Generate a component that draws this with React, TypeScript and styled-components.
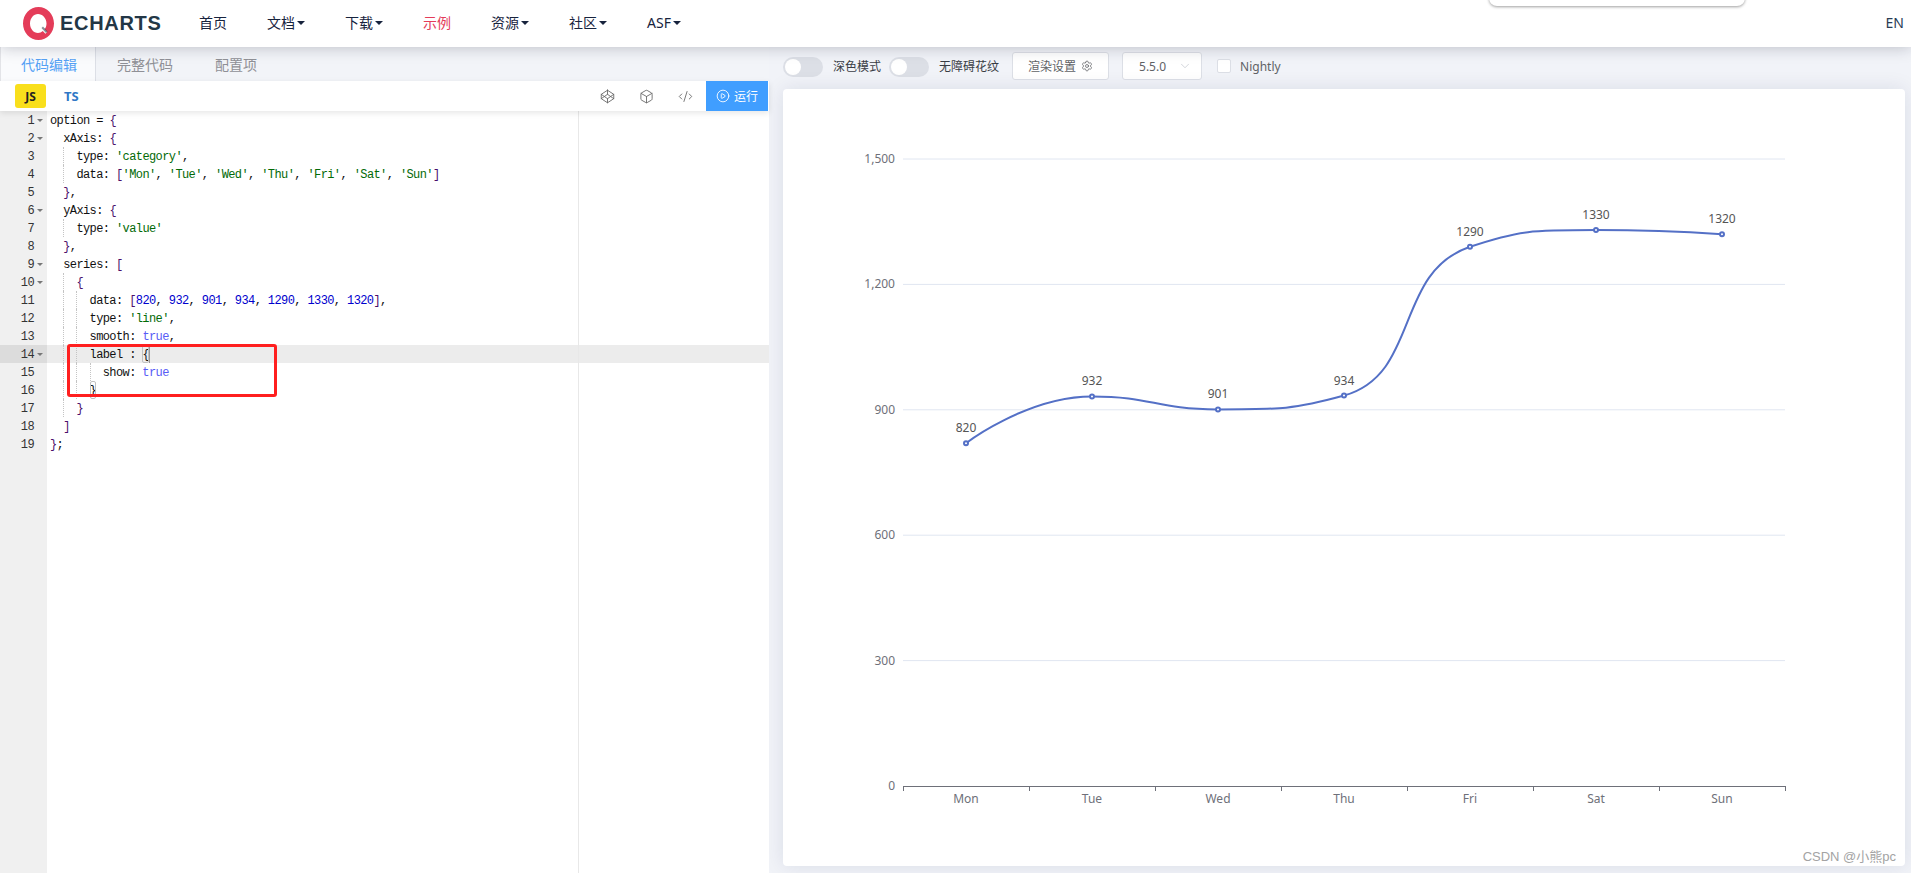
import React, { useMemo } from "react";
import styled, { createGlobalStyle } from "styled-components";
import { Box, ChevronDown, CirclePlay, CodeXml, Codepen, Settings } from "lucide-react";

const Global = createGlobalStyle`
  html, body { margin: 0; padding: 0; height: 100%; background: #fff; overflow: hidden; }
  body { font-family: "Noto Sans", "Noto Sans CJK SC", sans-serif; }
  * { box-sizing: border-box; }
`;

const Page = styled.div`
  width: 1911px;
  height: 873px;
  display: flex;
  flex-direction: column;
  overflow: hidden;
  position: relative;
`;

/* ---------- header ---------- */
const Header = styled.header`
  height: 47px;
  flex: none;
  display: flex;
  align-items: center;
  background: #fff;
  position: relative;
  z-index: 5;
  box-shadow: 0 0 16px rgba(20, 25, 45, 0.26);
`;
const Logo = styled.div`
  width: 199px;
  padding-left: 23px;
  display: flex;
  align-items: center;
  gap: 6px;
  flex: none;
  margin-top: -1px;
`;
const LogoWord = styled.span`
  font-family: "Liberation Sans", sans-serif;
  font-weight: 700;
  font-size: 20px;
  letter-spacing: 0.7px;
  color: #233746;
  line-height: 1;
`;
const Nav = styled.nav`
  display: flex;
  align-items: center;
  gap: 40px;
  flex: 1;
  margin-top: -1px;
`;
const NavItem = styled.a<{ $active?: boolean }>`
  display: flex;
  align-items: center;
  font-size: 14px;
  line-height: 20px;
  color: ${(p) => (p.$active ? "#e43c59" : "#17233d")};
`;
const Caret = styled.i`
  width: 0;
  height: 0;
  margin-left: 2px;
  border-left: 4px solid transparent;
  border-right: 4px solid transparent;
  border-top: 4px solid #17233d;
`;
const Lang = styled.span`
  font-size: 14px;
  color: #293c55;
  padding-right: 7px;
  margin-top: -3px;
`;
const SearchPop = styled.div`
  position: absolute;
  left: 1489px;
  top: -20px;
  width: 256px;
  height: 26px;
  background: #fff;
  border-radius: 8px;
  box-shadow: 0 1px 3px rgba(0, 0, 0, 0.38);
`;

/* ---------- layout ---------- */
const Main = styled.main`
  flex: 1;
  min-height: 0;
  display: flex;
`;
const Left = styled.section`
  width: 769px;
  flex: none;
  display: flex;
  flex-direction: column;
  background: #fff;
  position: relative;
  z-index: 2;
`;
const Right = styled.section`
  flex: 1;
  min-width: 0;
  display: flex;
  flex-direction: column;
  background: #f1f3f8;
  padding: 0 6px 7px 14px;
`;

/* ---------- tabs ---------- */
const Tabs = styled.div`
  height: 34px;
  flex: none;
  display: flex;
  background: #f2f4f8;
`;
const Tab = styled.div<{ $active?: boolean }>`
  font-size: 14px;
  line-height: 36px;
  padding: 0 21px;
  color: ${(p) => (p.$active ? "#55a1f5" : "#8f9096")};
  ${(p) =>
    p.$active
      ? `background: #fafbfd; border-left: 1px solid #e3e4e8; border-right: 1px solid #dcdfe6; padding-left: 20px; padding-right: 18px;`
      : ""}
`;

/* ---------- toolbar ---------- */
const Toolbar = styled.div`
  height: 30px;
  flex: none;
  display: flex;
  align-items: center;
  background: #fff;
  padding-left: 15px;
  position: relative;
  z-index: 2;
  box-shadow: 0 2px 6px rgba(0, 0, 0, 0.1);
`;
const JsBadge = styled.span`
  width: 31px;
  height: 24px;
  border-radius: 3px;
  background: #f9df1c;
  color: #222;
  font-size: 12px;
  font-weight: 700;
  display: flex;
  align-items: center;
  justify-content: center;
`;
const TsBadge = styled.span`
  margin-left: 18px;
  color: #3178c6;
  font-size: 13px;
  font-weight: 700;
`;
const ToolIcons = styled.div`
  margin-left: auto;
  display: flex;
  align-items: center;
  gap: 24px;
  color: #666;
  margin-right: 13px;
`;
const RunButton = styled.button`
  width: 62px;
  height: 30px;
  margin-right: 1px;
  background: #409eff;
  border: 0;
  padding: 0;
  color: #fff;
  font: inherit;
  font-size: 12px;
  display: flex;
  align-items: center;
  justify-content: center;
  gap: 4px;
`;

/* ---------- editor ---------- */
const Editor = styled.div`
  flex: 1;
  min-height: 0;
  display: flex;
  position: relative;
  font-family: "Liberation Mono", monospace;
  font-size: 12px;
  letter-spacing: -0.6px;
  line-height: 20px;
  &::after {
    content: "";
    position: absolute;
    left: 578px;
    top: 0;
    bottom: 0;
    width: 1px;
    background: #e8e8e8;
  }
`;
const Gutter = styled.div`
  width: 47px;
  flex: none;
  background: #f0f0f0;
`;
const GutterCell = styled.div<{ $active?: boolean }>`
  height: 18px;
  padding-right: 13px;
  text-align: right;
  color: #333;
  position: relative;
  background: ${(p) => (p.$active ? "#dcdcdc" : "transparent")};
`;
const Fold = styled.i`
  position: absolute;
  left: 37px;
  top: 8px;
  width: 0;
  height: 0;
  border-left: 3px solid transparent;
  border-right: 3px solid transparent;
  border-top: 3px solid #777;
`;
const Code = styled.div`
  flex: 1;
  min-width: 0;
`;
const Line = styled.div<{ $active?: boolean }>`
  height: 18px;
  padding-left: 3px;
  white-space: pre;
  color: #111;
  display: flex;
  background: ${(p) => (p.$active ? "#ececec" : "transparent")};
`;
const Indent = styled.span<{ $guide?: boolean }>`
  flex: none;
  display: block;
  width: 13.2px;
  height: 18px;
  ${(p) => (p.$guide ? "border-left: 1px dotted #c4c4c4;" : "")}
`;
const tokenColors: Record<string, string> = {
  s: "#036a07",
  n: "#0000cd",
  k: "#585cf6",
  p: "#4b0f6b",
  t: "#111",
};
const Token = styled.span<{ $k: string }>`
  color: ${(p) => tokenColors[p.$k]};
`;
const Matched = styled.span`
  display: inline-block;
  height: 18px;
  outline: 1px solid #c0c0c0;
  outline-offset: -1px;
  border-radius: 2px;
  color: #111;
`;
const Cursor = styled.span`
  display: inline-block;
  width: 1px;
  height: 18px;
  background: #999;
`;
const RedBox = styled.div`
  position: absolute;
  left: 67px;
  top: 233px;
  width: 210px;
  height: 53px;
  border: 3px solid #ff1f1f;
  border-radius: 3px;
  z-index: 3;
`;

/* ---------- right panel ---------- */
const Controls = styled.div`
  height: 38px;
  margin-bottom: 4px;
  flex: none;
  display: flex;
  align-items: center;
  font-size: 12px;
  color: #3a3d45;
`;
const Switch = styled.span`
  width: 40px;
  height: 20px;
  margin-top: 2px;
  border-radius: 10px;
  background: #dcdfe6;
  padding: 2px;
  flex: none;
  &::before {
    content: "";
    display: block;
    width: 16px;
    height: 16px;
    border-radius: 50%;
    background: #fff;
  }
`;
const SwitchLabel = styled.span`
  margin-left: 10px;
  margin-right: 8px;
  white-space: nowrap;
`;
const OutlineBox = styled.div`
  height: 28px;
  display: flex;
  align-items: center;
  background: #fff;
  border: 1px solid #dcdfe6;
  border-radius: 3px;
  color: #606266;
`;
const RenderButton = styled(OutlineBox)`
  width: 97px;
  margin-left: 5px;
  justify-content: center;
  gap: 5px;
`;
const VersionSelect = styled(OutlineBox)`
  width: 80px;
  margin-left: 13px;
  padding: 0 9px 0 16px;
  justify-content: space-between;
  color: #606266;
  svg {
    color: #c0c4cc;
  }
`;
const Check = styled.span`
  width: 14px;
  height: 14px;
  margin-left: 15px;
  background: #fff;
  border: 1px solid #dcdfe6;
  border-radius: 2px;
`;
const CheckLabel = styled.span`
  margin-left: 9px;
  color: #606266;
`;
const Card = styled.div`
  flex: 1;
  min-height: 0;
  background: #fff;
  border-radius: 4px;
  box-shadow: 0 0 20px rgba(20, 30, 80, 0.1);
  position: relative;
`;
const ChartSvg = styled.svg`
  display: block;
  width: 100%;
  height: 100%;
  font-family: "Noto Sans", "Noto Sans CJK SC", sans-serif;
  font-size: 12px;
`;
const Watermark = styled.div`
  position: absolute;
  right: 9px;
  bottom: 0;
  font-size: 13px;
  line-height: 18px;
  font-family: "Liberation Sans", "Noto Sans CJK SC", sans-serif;
  color: #a3a3a3;
  white-space: nowrap;
`;

/* ---------- data ---------- */
type Seg = [string, string];
type Row = { lvl: number; segs: Seg[]; fold?: boolean };
const rows: Row[] = [
  { lvl: 0, fold: true, segs: [["t", "option = "], ["p", "{"]] },
  { lvl: 1, fold: true, segs: [["t", "xAxis: "], ["p", "{"]] },
  { lvl: 2, segs: [["t", "type: "], ["s", "'category'"], ["t", ","]] },
  {
    lvl: 2,
    segs: [
      ["t", "data: "], ["p", "["], ["s", "'Mon'"], ["t", ", "], ["s", "'Tue'"], ["t", ", "], ["s", "'Wed'"], ["t", ", "],
      ["s", "'Thu'"], ["t", ", "], ["s", "'Fri'"], ["t", ", "], ["s", "'Sat'"], ["t", ", "], ["s", "'Sun'"], ["p", "]"],
    ],
  },
  { lvl: 1, segs: [["p", "}"], ["t", ","]] },
  { lvl: 1, fold: true, segs: [["t", "yAxis: "], ["p", "{"]] },
  { lvl: 2, segs: [["t", "type: "], ["s", "'value'"]] },
  { lvl: 1, segs: [["p", "}"], ["t", ","]] },
  { lvl: 1, fold: true, segs: [["t", "series: "], ["p", "["]] },
  { lvl: 2, fold: true, segs: [["p", "{"]] },
  {
    lvl: 3,
    segs: [
      ["t", "data: "], ["p", "["], ["n", "820"], ["t", ", "], ["n", "932"], ["t", ", "], ["n", "901"], ["t", ", "],
      ["n", "934"], ["t", ", "], ["n", "1290"], ["t", ", "], ["n", "1330"], ["t", ", "], ["n", "1320"], ["p", "]"], ["t", ","],
    ],
  },
  { lvl: 3, segs: [["t", "type: "], ["s", "'line'"], ["t", ","]] },
  { lvl: 3, segs: [["t", "smooth: "], ["k", "true"], ["t", ","]] },
  { lvl: 3, fold: true, segs: [["t", "label : "]] },
  { lvl: 4, segs: [["t", "show: "], ["k", "true"]] },
  { lvl: 3, segs: [] },
  { lvl: 2, segs: [["p", "}"]] },
  { lvl: 1, segs: [["p", "]"]] },
  { lvl: 0, segs: [["p", "}"], ["t", ";"]] },
];

const navItems = [
  { t: "首页" },
  { t: "文档", c: true },
  { t: "下载", c: true },
  { t: "示例", a: true },
  { t: "资源", c: true },
  { t: "社区", c: true },
  { t: "ASF", c: true },
];

const values = [820, 932, 901, 934, 1290, 1330, 1320];
const days = ["Mon", "Tue", "Wed", "Thu", "Fri", "Sat", "Sun"];
const X0 = 903;
const BAND = 126;
const Y0 = 786;
const yOf = (v: number) => Y0 - (v * 627) / 1500;
const clamp = (v: number, a: number, b: number) => Math.max(Math.min(v, Math.max(a, b)), Math.min(a, b));

/* The same clamped smoothing that ECharts applies to a smooth line series. */
function smoothPath(pts: { x: number; y: number }[]) {
  const s = 0.5;
  let d = `M${pts[0].x} ${pts[0].y}`;
  let cx = pts[0].x;
  let cy = pts[0].y;
  for (let i = 1; i < pts.length; i++) {
    const p = pts[i];
    const prev = pts[i - 1];
    const next = pts[i + 1];
    if (!next) {
      d += `C${cx} ${cy} ${p.x} ${p.y} ${p.x} ${p.y}`;
      break;
    }
    const l0 = Math.hypot(p.x - prev.x, p.y - prev.y);
    const l1 = Math.hypot(next.x - p.x, next.y - p.y);
    const r = l1 / (l0 + l1);
    const nx0 = clamp(p.x + (next.x - prev.x) * s * r, next.x, p.x);
    const ny0 = clamp(p.y + (next.y - prev.y) * s * r, next.y, p.y);
    const c1x = clamp(p.x - ((nx0 - p.x) * l0) / l1, prev.x, p.x);
    const c1y = clamp(p.y - ((ny0 - p.y) * l0) / l1, prev.y, p.y);
    d += `C${cx} ${cy} ${c1x} ${c1y} ${p.x} ${p.y}`;
    cx = p.x + ((p.x - c1x) * l1) / l0;
    cy = p.y + ((p.y - c1y) * l1) / l0;
  }
  return d;
}

function Chart() {
  const pts = useMemo(() => values.map((v, i) => ({ x: X0 + BAND * (i + 0.5), y: yOf(v), v })), []);
  const path = useMemo(() => smoothPath(pts), [pts]);
  return (
    <ChartSvg viewBox="783 89 1122 777" preserveAspectRatio="xMinYMin meet">
      {[300, 600, 900, 1200, 1500].map((v) => (
        <line key={v} x1={X0} x2={1785} y1={yOf(v)} y2={yOf(v)} stroke="#e0e6f1" strokeWidth="1" />
      ))}
      {[0, 300, 600, 900, 1200, 1500].map((v) => (
        <text key={v} x={895} y={yOf(v) + 4} textAnchor="end" fill="#6e7079">
          {v.toLocaleString("en-US")}
        </text>
      ))}
      <line x1={X0} x2={1785} y1={Y0 + 0.5} y2={Y0 + 0.5} stroke="#6e7079" />
      {Array.from({ length: 8 }, (_, i) => (
        <line key={i} x1={X0 + i * BAND + 0.5} x2={X0 + i * BAND + 0.5} y1={Y0} y2={Y0 + 5} stroke="#6e7079" />
      ))}
      {days.map((d, i) => (
        <text key={d} x={X0 + BAND * (i + 0.5)} y={803} textAnchor="middle" fill="#6e7079">
          {d}
        </text>
      ))}
      <path d={path} fill="none" stroke="#5470c6" strokeWidth="2" />
      {pts.map((p) => (
        <g key={p.x}>
          <circle cx={p.x} cy={p.y} r="2" fill="#fff" stroke="#5470c6" strokeWidth="2" />
          <text x={p.x} y={p.y - 11} textAnchor="middle" fill="#555">
            {p.v}
          </text>
        </g>
      ))}
    </ChartSvg>
  );
}

function LogoMark() {
  return (
    <svg width="31" height="33" viewBox="0 0 31 33" aria-hidden="true">
      <path
        fillRule="evenodd"
        fill="#e43c59"
        d="M15.5 0C24 0 31 7.4 31 16.500S24 33 15.500 33 0 25.600 0 16.500 7 0 15.500 0ZM15 7c-4.400 0-8 4.200-8 9.500S10.600 26 15 26c1.800 0 3.500-.7 4.800-1.900l2.600 2.600 1.800-1.800-2.700-2.800C23 20.600 23.500 18.600 23.500 16.500 23.500 11.200 19.400 7 15 7Z"
      />
      <path d="M20 19.500l4.500 5-1.500 1.500-4.500-5z" fill="#233746" opacity="0.55" />
    </svg>
  );
}

export default function App() {
  return (
    <Page>
      <Global />
      <Header>
        <Logo>
          <LogoMark />
          <LogoWord>ECHARTS</LogoWord>
        </Logo>
        <Nav>
          {navItems.map((n) => (
            <NavItem key={n.t} $active={n.a}>
              {n.t}
              {n.c && <Caret />}
            </NavItem>
          ))}
        </Nav>
        <Lang>EN</Lang>
        <SearchPop />
      </Header>
      <Main>
        <Left>
          <Tabs>
            <Tab $active>代码编辑</Tab>
            <Tab>完整代码</Tab>
            <Tab>配置项</Tab>
          </Tabs>
          <Toolbar>
            <JsBadge>JS</JsBadge>
            <TsBadge>TS</TsBadge>
            <ToolIcons>
              <Codepen size={15} strokeWidth={1.4} />
              <Box size={15} strokeWidth={1.4} />
              <CodeXml size={15} strokeWidth={1.4} />
            </ToolIcons>
            <RunButton>
              <CirclePlay size={14} strokeWidth={1.5} />
              运行
            </RunButton>
          </Toolbar>
          <Editor>
            <Gutter>
              {rows.map((r, i) => (
                <GutterCell key={i} $active={i === 13}>
                  {i + 1}
                  {r.fold && <Fold />}
                </GutterCell>
              ))}
            </Gutter>
            <Code>
              {rows.map((r, i) => (
                <Line key={i} $active={i === 13}>
                  {Array.from({ length: r.lvl }, (_, g) => (
                    <Indent key={g} $guide={g > 0} />
                  ))}
                  {r.segs.map((s, j) => (
                    <Token key={j} $k={s[0]}>
                      {s[1]}
                    </Token>
                  ))}
                  {i === 13 && (
                    <>
                      <Matched>{"{"}</Matched>
                      <Cursor />
                    </>
                  )}
                  {i === 15 && <Matched>{"}"}</Matched>}
                </Line>
              ))}
            </Code>
            <RedBox />
          </Editor>
        </Left>
        <Right>
          <Controls>
            <Switch />
            <SwitchLabel>深色模式</SwitchLabel>
            <Switch />
            <SwitchLabel>无障碍花纹</SwitchLabel>
            <RenderButton>
              渲染设置
              <Settings size={12} strokeWidth={1.5} />
            </RenderButton>
            <VersionSelect>
              5.5.0
              <ChevronDown size={14} strokeWidth={1.2} />
            </VersionSelect>
            <Check />
            <CheckLabel>Nightly</CheckLabel>
          </Controls>
          <Card>
            <Chart />
            <Watermark>CSDN @小熊pc</Watermark>
          </Card>
        </Right>
      </Main>
    </Page>
  );
}
